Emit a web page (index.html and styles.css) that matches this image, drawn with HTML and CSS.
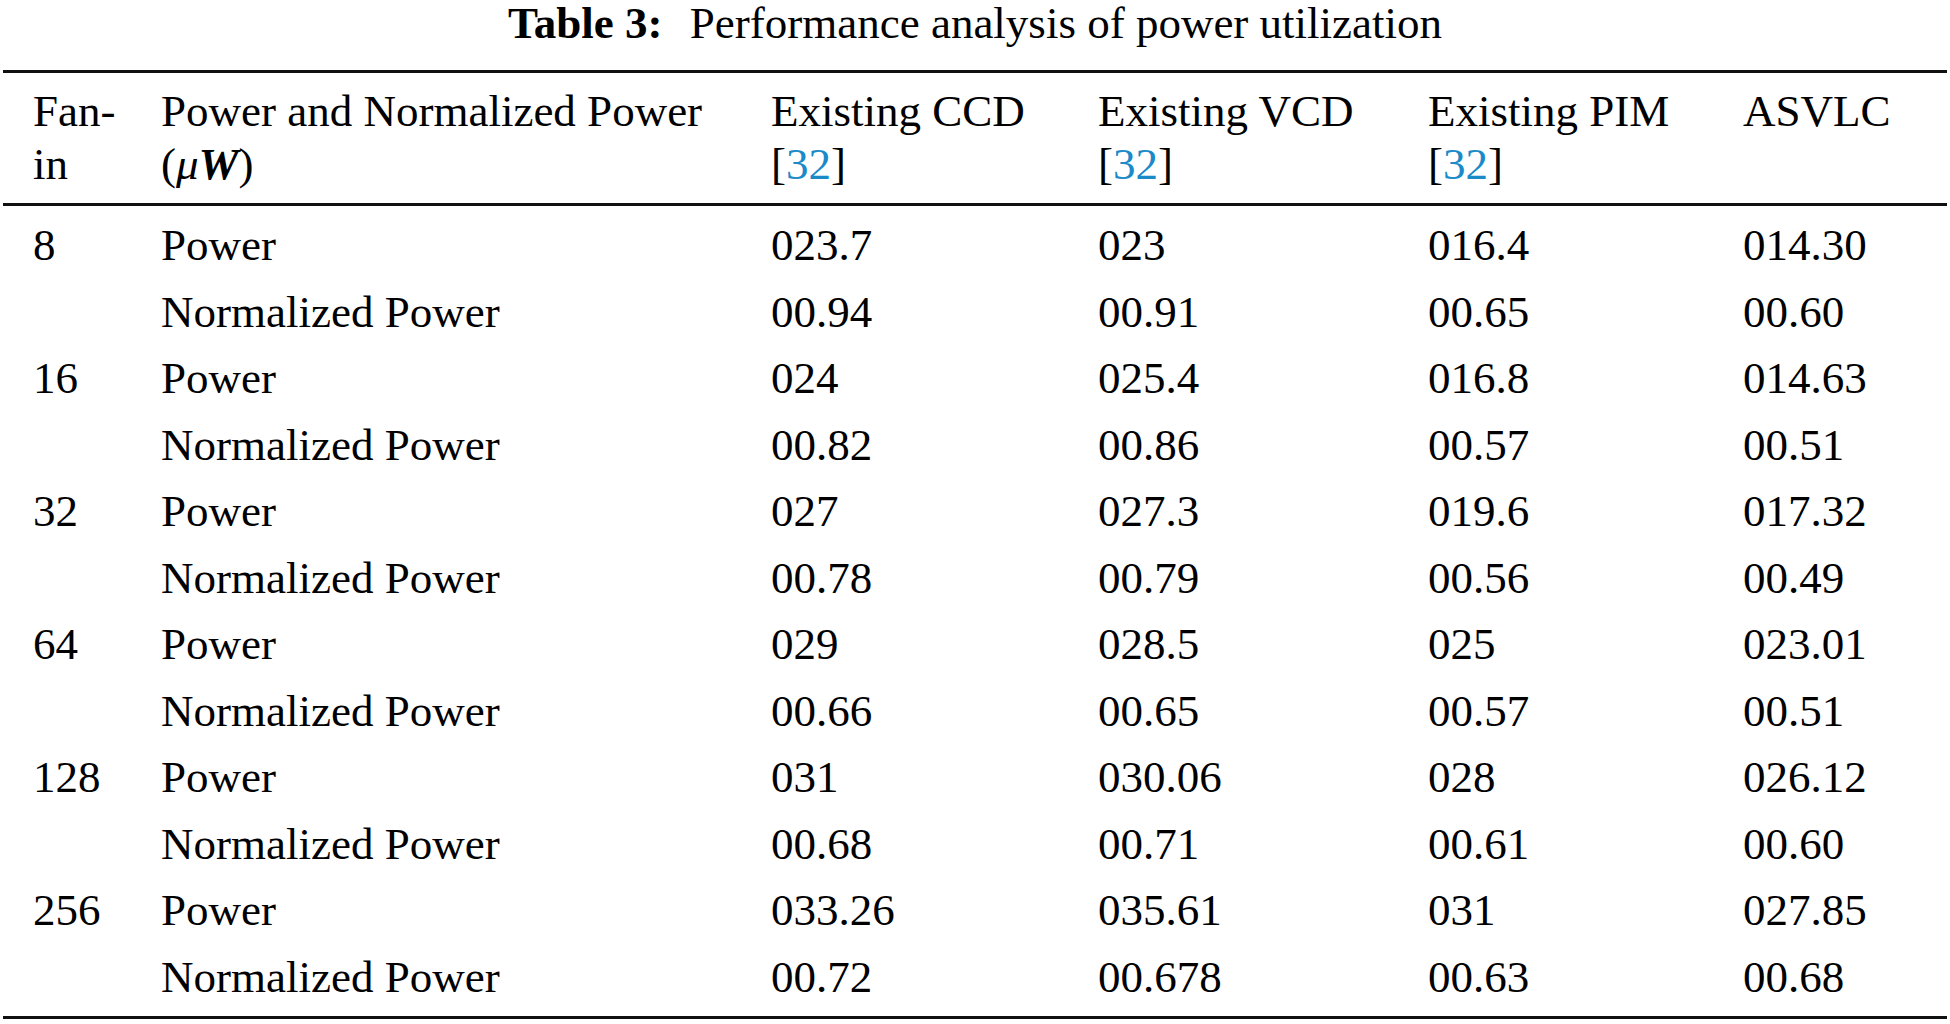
FILE: index.html
```html
<!DOCTYPE html>
<html lang="en">
<head>
<meta charset="utf-8">
<title>Table 3: Performance analysis of power utilization</title>
<link rel="stylesheet" href="styles.css">
</head>
<body>
<div class="page">
  <div class="caption"><span class="label">Table 3:</span> Performance analysis of power utilization</div>
  <table class="data">
    <colgroup>
      <col class="c-fan">
      <col class="c-kind">
      <col class="c-ccd">
      <col class="c-vcd">
      <col class="c-pim">
      <col class="c-asv">
    </colgroup>
    <thead>
      <tr>
        <th>Fan-<br>in</th>
        <th>Power and Normalized Power<br><span class="paren">(</span><span class="mu">μ</span><span class="w">W</span><span class="paren">)</span></th>
        <th>Existing CCD<br>[<a class="ref" href="#ref32">32</a>]</th>
        <th>Existing VCD<br>[<a class="ref" href="#ref32">32</a>]</th>
        <th>Existing PIM<br>[<a class="ref" href="#ref32">32</a>]</th>
        <th>ASVLC</th>
      </tr>
    </thead>
    <tbody>
      <tr><td>8</td><td>Power</td><td>023.7</td><td>023</td><td>016.4</td><td>014.30</td></tr>
      <tr><td></td><td>Normalized Power</td><td>00.94</td><td>00.91</td><td>00.65</td><td>00.60</td></tr>
      <tr><td>16</td><td>Power</td><td>024</td><td>025.4</td><td>016.8</td><td>014.63</td></tr>
      <tr><td></td><td>Normalized Power</td><td>00.82</td><td>00.86</td><td>00.57</td><td>00.51</td></tr>
      <tr><td>32</td><td>Power</td><td>027</td><td>027.3</td><td>019.6</td><td>017.32</td></tr>
      <tr><td></td><td>Normalized Power</td><td>00.78</td><td>00.79</td><td>00.56</td><td>00.49</td></tr>
      <tr><td>64</td><td>Power</td><td>029</td><td>028.5</td><td>025</td><td>023.01</td></tr>
      <tr><td></td><td>Normalized Power</td><td>00.66</td><td>00.65</td><td>00.57</td><td>00.51</td></tr>
      <tr><td>128</td><td>Power</td><td>031</td><td>030.06</td><td>028</td><td>026.12</td></tr>
      <tr><td></td><td>Normalized Power</td><td>00.68</td><td>00.71</td><td>00.61</td><td>00.60</td></tr>
      <tr><td>256</td><td>Power</td><td>033.26</td><td>035.61</td><td>031</td><td>027.85</td></tr>
      <tr class="last"><td></td><td>Normalized Power</td><td>00.72</td><td>00.678</td><td>00.63</td><td>00.68</td></tr>
    </tbody>
  </table>
</div>
</body>
</html>
```
FILE: styles.css
```css
html, body {
  margin: 0;
  padding: 0;
  background: #ffffff;
}

.page {
  width: 1944px;
  padding: 0 3px;
  font-family: "Liberation Serif", "Times New Roman", serif;
  color: #000000;
  font-size: 45px;
}

.caption {
  text-align: center;
  line-height: 46px;
  height: 50px;
  margin-bottom: 20px;
  white-space: nowrap;
}

.caption .label {
  font-weight: bold;
  margin-right: 16px;
}

.data {
  width: 1944px;
  table-layout: fixed;
  border-collapse: collapse;
  border-top: 3px solid #111111;
  border-bottom: 3px solid #111111;
}

.c-fan { width: 128px; }
.c-kind { width: 610px; }
.c-ccd { width: 327px; }
.c-vcd { width: 330px; }
.c-pim { width: 315px; }
.c-asv { width: 234px; }

.data th {
  font-weight: normal;
  text-align: left;
  vertical-align: top;
  line-height: 53px;
  padding: 12px 0 12px 30px;
  border-bottom: 3px solid #111111;
}

.data td {
  text-align: left;
  line-height: 66.5px;
  height: 66.5px;
  padding: 0 0 0 30px;
  white-space: nowrap;
}

.data tbody tr:first-child td {
  padding-top: 6px;
}

.data tbody tr.last td {
  padding-bottom: 6px;
}

.ref {
  color: #1a8ac8;
  text-decoration: none;
}

.mu {
  font-style: italic;
}

.w {
  font-style: italic;
  font-weight: bold;
}
```
